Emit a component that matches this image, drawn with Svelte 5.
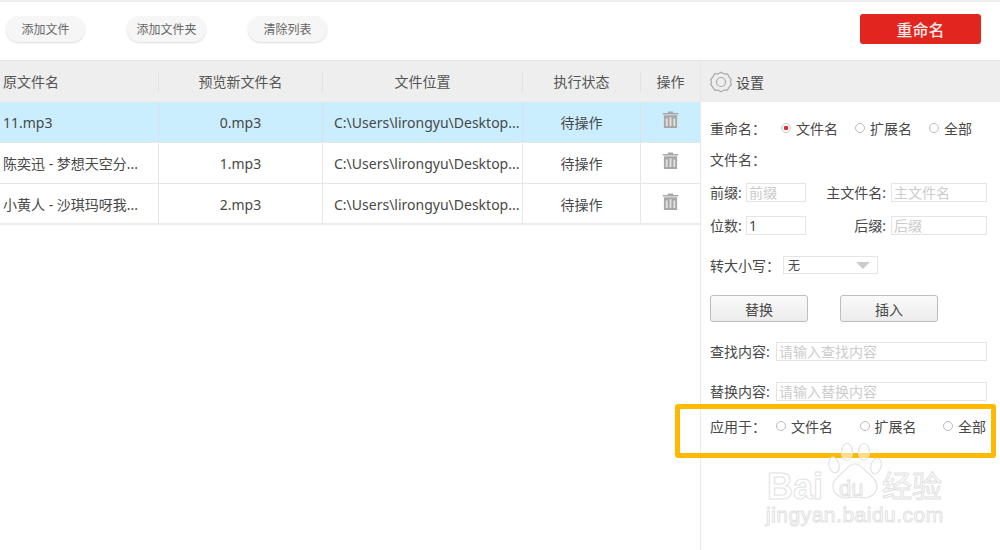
<script>
  const columns = [
    { title: '原文件名', cls: 'left' },
    { title: '预览新文件名', cls: '' },
    { title: '文件位置', cls: '' },
    { title: '执行状态', cls: '' },
    { title: '操作', cls: '' }
  ]
  const rows = [
    { name: '11.mp3', preview: '0.mp3', active: true },
    { name: '陈奕迅 - 梦想天空分...', preview: '1.mp3', active: false },
    { name: '小黄人 - 沙琪玛呀我...', preview: '2.mp3', active: false }
  ]
  const path = 'C:\\Users\\lirongyu\\Desktop...'
</script>

<div class="page">
  <div class="toolbar">
    <div class="tools">
      <button type="button" class="pill">添加文件</button>
      <button type="button" class="pill">添加文件夹</button>
      <button type="button" class="pill">清除列表</button>
    </div>
    <button type="button" class="rename">重命名</button>
  </div>

  <div class="main">
    <div class="list">
      <div class="head">
        {#each columns as col}
          <div class="th {col.cls}">{col.title}</div>
        {/each}
      </div>
      {#each rows as row}
        <div class="row" class:active={row.active}>
          <div class="td left">{row.name}</div>
          <div class="td">{row.preview}</div>
          <div class="td path">{path}</div>
          <div class="td">待操作</div>
          <div class="td trash">
            <svg width="17" height="17" viewBox="0 0 18 18">
              <path d="M6.500 0.500h5l0.600 1.500h5.100v1.600H0.800V2h5.100z" fill="#a8a8a8" />
              <path d="M2 4.500h14V18H2z" fill="#a8a8a8" />
              <path d="M4 8h2v8H4zM8 6.500h2V16H8zM12 8h2v8h-2z" fill="#e2e2e2" />
            </svg>
          </div>
        </div>
      {/each}
    </div>

    <div class="settings">
      <div class="settings-head">
        <svg width="22" height="22" viewBox="0 0 22 22" fill="none" stroke="#aaa" stroke-width="1.200">
          <path d="M11 1.200l3 1.700 3.400 0 1.700 3 2.200 2.600-.8 2.500.8 2.500-2.200 2.600-1.700 3-3.400 0-3 1.700-3-1.700-3.400 0-1.700-3-2.200-2.600.8-2.500-.8-2.500 2.200-2.600 1.700-3 3.400 0z" />
          <circle cx="11" cy="11" r="4.500" />
        </svg>
        <span>设置</span>
      </div>

      <div class="settings-body">
        <div class="line radios first">
          <span class="label wide">重命名：</span>
          <label class="radio on"><i></i>文件名</label>
          <label class="radio"><i></i>扩展名</label>
          <label class="radio"><i></i>全部</label>
        </div>
        <div class="line sub">文件名：</div>

        <div class="line pair one">
          <span class="short">前缀:</span>
          <input class="small" placeholder="前缀" />
          <span class="mid">主文件名:</span>
          <input class="medium" placeholder="主文件名" />
        </div>
        <div class="line pair two">
          <span class="short">位数:</span>
          <input class="small dark" value="1" />
          <span class="mid">后缀:</span>
          <input class="medium" placeholder="后缀" />
        </div>

        <div class="line case">
          <span class="case-label">转大小写：</span>
          <div class="select"><span>无</span><b></b></div>
        </div>

        <div class="actions">
          <button type="button" class="gray">替换</button>
          <button type="button" class="gray">插入</button>
        </div>

        <div class="line find">
          <span class="find-label">查找内容:</span>
          <input class="wide-input" placeholder="请输入查找内容" />
        </div>
        <div class="line find next">
          <span class="find-label">替换内容:</span>
          <input class="wide-input" placeholder="请输入替换内容" />
        </div>

        <div class="line radios apply">
          <span class="apply-label">应用于：</span>
          <label class="radio"><i></i>文件名</label>
          <label class="radio"><i></i>扩展名</label>
          <label class="radio"><i></i>全部</label>
        </div>
      </div>
    </div>
  </div>

  <div class="highlight"></div>

  <div class="watermark">
    <svg class="paw" width="54" height="58" viewBox="0 0 54 58" fill="rgba(255,255,255,.5)" stroke="#e2e2e2" stroke-width="1.200">
      <ellipse cx="19" cy="9" rx="5.500" ry="8.500" />
      <ellipse cx="36" cy="9" rx="5.500" ry="8.500" />
      <ellipse cx="6" cy="22" rx="5" ry="8" transform="rotate(-15 6 22)" />
      <ellipse cx="48" cy="23" rx="5" ry="8" transform="rotate(15 48 23)" />
      <path d="M27 21c6 0 8 5 13 9 5 4 9 8 9 13 0 8-7 12-13 12-3 0-6-1-9-1s-6 1-9 1c-6 0-13-4-13-12 0-5 4-9 9-13 5-4 7-9 13-9z" />
    </svg>
    <span class="bai">Bai</span>
    <span class="du">du</span>
    <span class="cn">经验</span>
    <div class="site">jingyan.baidu.com</div>
  </div>
</div>

<style>
  :global(body) {
    margin: 0;
    background: #fff;
  }

  .page {
    position: relative;
    width: 1000px;
    height: 550px;
    overflow: hidden;
    font-family: "Noto Sans", "Noto Sans CJK SC", sans-serif;
    color: #484848;
    font-size: 14px;
    border-top: 2px solid #eee;
    box-sizing: border-box;
  }

  button, input {
    font-family: inherit;
  }

  .toolbar {
    height: 59px;
    display: flex;
    align-items: center;
    justify-content: space-between;
    padding: 0 19px 4px 6px;
    box-sizing: border-box;
    border-bottom: 1px solid #e4e4e4;
  }

  .tools {
    display: flex;
    gap: 42px;
  }

  .pill {
    width: 79px;
    height: 26px;
    padding: 0;
    border: 0;
    border-radius: 13px;
    background: #f6f6f6;
    box-shadow: 0 1px 2px rgba(0, 0, 0, .14);
    color: #666;
    font-size: 12px;
  }

  .rename {
    width: 121px;
    height: 30px;
    padding: 0;
    border: 0;
    border-radius: 3px;
    background: #e0261f;
    color: #fbe9e8;
    font-size: 16px;
    font-weight: 500;
  }

  .main {
    display: flex;
    height: 489px;
  }

  .list {
    width: 700px;
  }

  .head, .row {
    display: grid;
    grid-template-columns: 159px 164px 200px 118px 59px;
  }

  .head {
    height: 41px;
    background: #eee;
    align-items: center;
  }

  .th {
    height: 20px;
    line-height: 20px;
    text-align: center;
    color: #555;
    border-right: 1px solid #e2e2e2;
  }

  .th:last-child {
    border-right: 0;
  }

  .row {
    height: 41px;
    box-sizing: border-box;
    border-bottom: 1px solid #e6e6e6;
  }

  .row:last-child {
    height: 41px;
    border-bottom: 2px solid #ececec;
  }

  .row.active {
    background: #cbeeff;
  }

  .td {
    line-height: 41px;
    text-align: center;
    white-space: nowrap;
    overflow: hidden;
    border-right: 1px solid #e6e6e6;
    color: #484848;
  }

  .active .td {
    border-right-color: #d6e4ea;
  }

  .td:last-child {
    border-right: 0;
  }

  .left, .th.left {
    text-align: left;
    padding-left: 3px;
  }

  .td.path {
    text-align: left;
    padding-left: 11px;
  }

  .trash {
    display: flex;
    justify-content: center;
    padding: 9px 1px 0 0;
    box-sizing: border-box;
  }

  .settings {
    width: 300px;
    box-sizing: border-box;
    border-left: 1px solid #e8e8e8;
  }

  .settings-head {
    height: 41px;
    background: #eee;
    display: flex;
    align-items: center;
    gap: 4px;
    padding-left: 9px;
  }

  .settings-body {
    padding-left: 9px;
  }

  .line {
    display: flex;
    align-items: center;
    height: 20px;
  }

  .first {
    margin-top: 16px;
  }

  .sub {
    margin-top: 11px;
  }

  .label.wide {
    width: 71px;
    flex: none;
  }

  .radio {
    display: flex;
    flex: none;
    align-items: center;
    gap: 5px;
    margin-right: 17px;
    white-space: nowrap;
  }

  .radio i {
    width: 10px;
    height: 10px;
    border: 1px solid #bbb;
    border-radius: 50%;
    box-sizing: border-box;
    background: #fff;
    margin-top: -1px;
  }

  .radio.on i {
    border-color: #ccc;
    background: radial-gradient(circle, #ec2a2a 0 2px, #fff 2.500px);
  }

  input {
    height: 19px;
    padding: 0 2px;
    box-sizing: border-box;
    border: 1px solid #e4e4e4;
    outline: 0;
    font-size: 14px;
    color: #484848;
    background: #fff;
  }

  input::placeholder {
    color: #ccc;
    opacity: 1;
  }

  .one {
    margin-top: 13px;
  }

  .two {
    margin-top: 13px;
  }

  .short {
    width: 36px;
  }

  .small {
    width: 60px;
  }

  .mid {
    width: 80px;
    margin-right: 5px;
    text-align: right;
    white-space: nowrap;
  }

  .medium {
    width: 96px;
  }

  .case {
    margin-top: 20px;
  }

  .case-label {
    width: 73px;
    white-space: nowrap;
  }

  .select {
    width: 95px;
    height: 18px;
    box-sizing: border-box;
    border: 1px solid #e4e4e4;
    display: flex;
    align-items: center;
    justify-content: space-between;
    padding: 0 7px 0 4px;
    font-size: 12px;
  }

  .select b {
    width: 0;
    height: 0;
    border-left: 7px solid transparent;
    border-right: 7px solid transparent;
    border-top: 7px solid #ccc;
  }

  .actions {
    display: flex;
    gap: 32px;
    margin-top: 20px;
  }

  .gray {
    width: 98px;
    height: 27px;
    padding: 0;
    border: 1px solid #bdbdbd;
    border-radius: 3px;
    background: linear-gradient(#fafafa, #ececec);
    color: #484848;
    font-size: 14px;
  }

  .find {
    margin-top: 19px;
  }

  .find.next {
    margin-top: 20px;
  }

  .find-label {
    width: 66px;
    white-space: nowrap;
  }

  .wide-input {
    width: 211px;
  }

  .apply {
    margin-top: 15px;
  }

  .apply-label {
    width: 66px;
    flex: none;
  }

  .apply .radio {
    margin-right: 26.500px;
  }

  .apply .radio:last-child {
    margin-right: 0;
  }

  .highlight {
    position: absolute;
    left: 675px;
    top: 402px;
    width: 321px;
    height: 54px;
    box-sizing: border-box;
    border: 5px solid #ffba00;
    border-radius: 3px;
  }

  .watermark {
    position: absolute;
    left: 766px;
    top: 441px;
    width: 190px;
    height: 90px;
    color: transparent;
    -webkit-text-stroke: 1px #e2e2e2;
    font-family: "Liberation Sans", "Noto Sans CJK SC", sans-serif;
  }

  .paw {
    position: absolute;
    left: 62px;
    top: 0;
  }

  .bai, .du, .cn, .site {
    position: absolute;
    white-space: nowrap;
  }

  .bai {
    left: 1px;
    top: 24px;
    font-size: 36px;
    line-height: 40px;
    font-weight: 700;
  }

  .du {
    left: 73px;
    top: 33px;
    font-size: 22px;
    line-height: 26px;
  }

  .cn {
    left: 116px;
    top: 24px;
    font-size: 30px;
    line-height: 40px;
  }

  .site {
    left: 0;
    top: 59px;
    font-size: 21px;
    line-height: 26px;
    letter-spacing: .5px;
  }
</style>
